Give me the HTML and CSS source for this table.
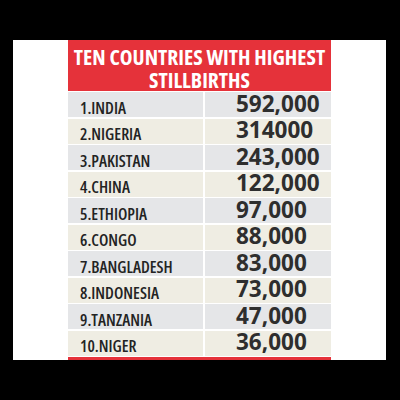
FILE: index.html
```html
<!DOCTYPE html>
<html lang="en">
<head>
    <meta charset="UTF-8">
    <meta name="viewport" content="width=device-width, initial-scale=1.0">
    <title>Ten countries with highest stillbirths</title>
    <link rel="stylesheet" href="styles.css">
</head>
<body>
    <div class="panel">
        <div class="chart">
            <div class="chart-title">TEN COUNTRIES WITH HIGHEST<br>STILLBIRTHS</div>
            <div class="rows">
                <div class="cell name odd">1.INDIA</div><div class="cell num odd">592,000</div>
                <div class="cell name even">2.NIGERIA</div><div class="cell num even">314000</div>
                <div class="cell name odd">3.PAKISTAN</div><div class="cell num odd">243,000</div>
                <div class="cell name even">4.CHINA</div><div class="cell num even">122,000</div>
                <div class="cell name odd">5.ETHIOPIA</div><div class="cell num odd">97,000</div>
                <div class="cell name even">6.CONGO</div><div class="cell num even">88,000</div>
                <div class="cell name odd">7.BANGLADESH</div><div class="cell num odd">83,000</div>
                <div class="cell name even">8.INDONESIA</div><div class="cell num even">73,000</div>
                <div class="cell name odd">9.TANZANIA</div><div class="cell num odd">47,000</div>
                <div class="cell name even">10.NIGER</div><div class="cell num even">36,000</div>
            </div>
            <div class="chart-foot"></div>
        </div>
    </div>
</body>
</html>
```

FILE: styles.css
```css
:root {
    --red: #e5323a;
    --row-grey: #e5e6e8;
    --row-beige: #efede3;
    --text-dark: #232323;
}
body, html { margin: 0; padding: 0; height: 100%; background: #000; }
body { padding-top: 40px; box-sizing: border-box; font-family: "Open Sans", sans-serif; }
.panel { margin-left: 13px; width: 373px; height: 320px; background: #fff; display: flex; justify-content: center; }
.chart { width: 263px; display: flex; flex-direction: column; gap: 1.5px; }
.chart-title { height: 51px; background: var(--red); color: #fff; text-align: center; font-weight: bold; font-stretch: 75%; font-size: 21.5px; line-height: 23px; padding-top: 4.5px; box-sizing: border-box; white-space: nowrap; }
.rows { display: grid; grid-template-columns: 135px 126px; grid-auto-rows: 25px; column-gap: 2px; row-gap: 1.5px; }
.cell { display: flex; align-items: center; box-sizing: border-box; }
.odd { background: var(--row-grey); }
.even { background: var(--row-beige); }
.name { padding-left: 12px; padding-top: 5.5px; font-weight: 600; font-stretch: 75%; font-size: 16.5px; color: var(--text-dark); }
.num { padding-left: 31px; padding-bottom: 3px; font-weight: bold; font-size: 22.5px; color: #2e2e2e; }
.chart-foot { height: 3px; background: var(--red); margin-top: auto; }
```
